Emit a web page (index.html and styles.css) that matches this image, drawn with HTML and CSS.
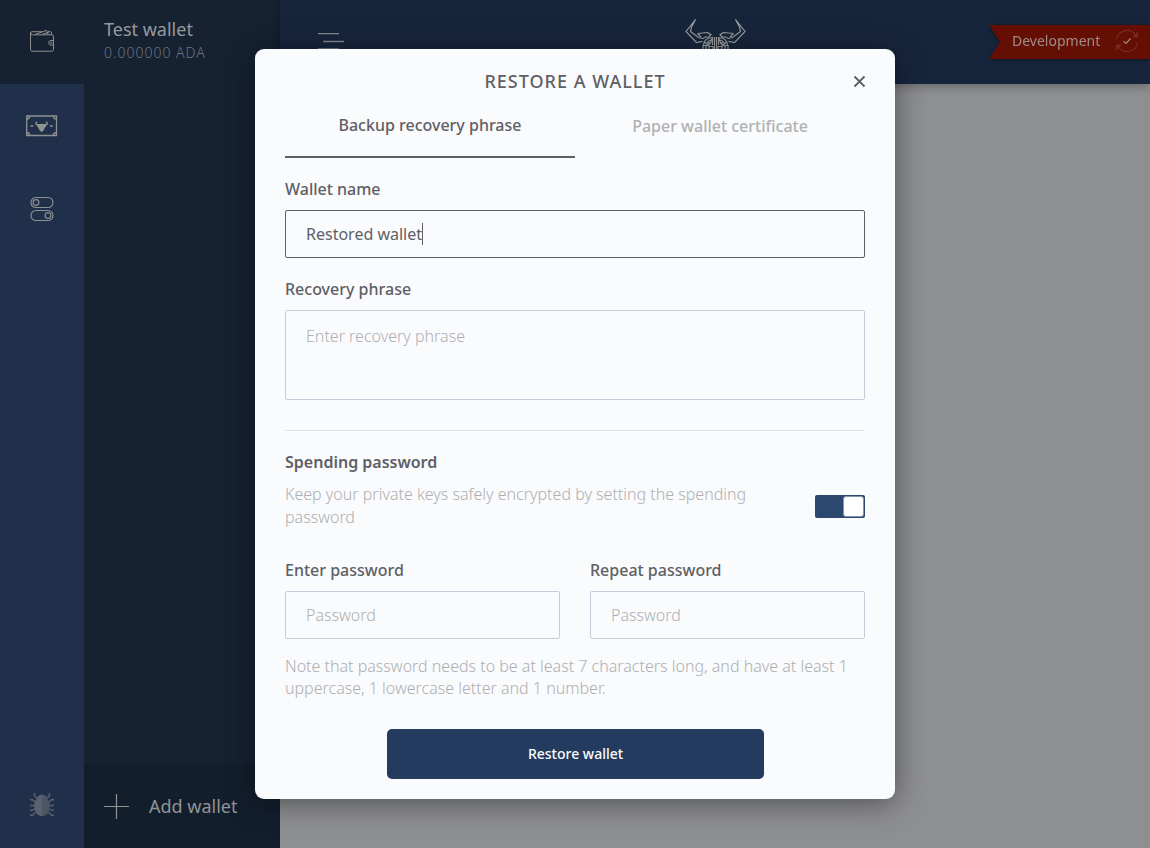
FILE: index.html
```html
<!DOCTYPE html>
<html lang="en">
<head>
<meta charset="utf-8">
<title>Restore a wallet</title>
<link rel="stylesheet" href="styles.css">
</head>
<body>
<div class="app">
  <nav class="rail">
    <a class="rail-item rail-active">
      <svg width="26" height="24" viewBox="0 0 26 24" fill="none" stroke="#8f8f8e" stroke-width="1"><path d="M1.500 3.500v17q0 1.700 1.700 1.700h19.600q1.700 0 1.700-1.700V7.500q0-1.700-1.700-1.700H3.500Q1.500 5.800 1.500 4.200T3.500 2.700H13M6 5.500L17.500 1.300 19 5.500M13 5.500L20 3M19 2.700h2.500q1 0 1 1v2M24.500 11.500h-2.500a2.300 2.300 0 0 0 0 4.600h2.500"/><circle cx="22.300" cy="13.800" r=".6"/></svg>
    </a>
    <a class="rail-item rail-money">
      <svg width="32" height="22" viewBox="0 0 32 22" fill="none" stroke="#8f9292" stroke-width="1.300"><path d="M.7 1h29.800v19.500H.7zM.7 4q3 0 3-3M27.500 1q0 3 3 3M.7 17.500q3 0 3 3M27.500 20.500q0-3 3-3M4.500 11h2.800M24 11h2.800"/><path stroke-width="1.400" d="M11 6.800Q9 8.700 10.700 9.700H20.500Q22.200 8.700 20.200 6.800"/><path fill="#8f9292" stroke="none" d="M11 9.300L14 9.800 15 8.800H16.200L17.200 9.800 20.200 9.300 19.700 12.200 18.700 12.700 18 15 16.200 16.800H15L13.200 15 12.500 12.700 11.500 12.200z"/></svg>
    </a>
    <a class="rail-item">
      <svg width="24" height="26" viewBox="0 0 24 26" fill="none" stroke="#8f9292" stroke-width="1.100"><rect x="1" y="1.500" width="22" height="10" rx="5"/><rect x="1" y="14.500" width="22" height="10" rx="5"/><circle cx="6" cy="6.500" r="2.900"/><circle cx="18" cy="19.500" r="2.900"/></svg>
    </a>
    <a class="rail-item rail-bottom">
      <svg width="26" height="26" viewBox="0 0 26 26"><path fill="none" stroke="#59616e" stroke-width="1.400" d="M5.500 1v2q0 2 3.500 3.500M20.500 1v2q0 2-3.500 3.500M1 7.700h2.500q1.500 2.500 4 2.500M25 7.700h-2.500q-1.500 2.500-4 2.500M1 13.500h24M1 18.300h2.500q1.500-1.500 4-1.500M25 18.300h-2.500q-1.500-1.500-4-1.500M1 23.300h2.500q2-3 5-3.200M25 23.300h-2.500q-2-3-5-3.200"/><path fill="#5b626f" d="M13 2.500Q8.500 3 8 6.500 5.300 9 5.300 14 5.300 23.500 13 24.500z"/><path fill="#4d5664" d="M13 2.500Q17.500 3 18 6.500 20.700 9 20.700 14 20.700 23.500 13 24.500z"/></svg>
    </a>
  </nav>
  <aside class="wallets">
    <div class="wallet">
      <div class="wallet-name">Test wallet</div>
      <div class="wallet-amount">0.000000 ADA</div>
    </div>
    <div class="add-wallet">
      <svg width="25" height="25" viewBox="0 0 25 25" stroke="#929394" stroke-width="1.200"><path d="M0 12.500h25M12.500 0v25"/></svg>
      <span>Add wallet</span>
    </div>
  </aside>
  <section class="main">
    <header class="topbar">
      <svg class="menu-icon" width="26" height="18" viewBox="0 0 26 18" stroke="#85888d" stroke-width="1.400"><path d="M0 1.600h21M5 9.500h21M0 17h21"/></svg>
      <svg class="logo" width="62" height="42" viewBox="0 0 62 42" fill="none" stroke="#979a9a" stroke-width="1.200"><g id="horn"><path d="M10.500 1.500L1 13.500 11.500 24.500 17.500 23.300M10.500 1.500L6.500 9 5.500 13.500 13.500 19.500 17.500 20.500M12.500 15.500L16 19M12.500 15.500L22.500 14.500 26 16.700 22.500 20M17.500 20.500L22 18.500M18.500 27Q19 20 27.500 19.500L25 26M22 26.500Q22 23 26 22M27.500 19.500V27M29.500 42V19M18 32V27.500H24V31M21 27.500V32M24 24V28.500H28V32M19.500 24L24 28"/></g><use href="#horn" transform="matrix(-1 0 0 1 61 0)"/></svg>
      <div class="ribbon-shadow"><div class="ribbon">
        <span>Development</span>
        <svg width="24" height="24" viewBox="0 0 24 24" fill="none" stroke="#792b25" stroke-width="1.200"><path d="M1.500 10.500A10.500 10.500 0 0 1 20.500 6M22.500 13.500A10.500 10.500 0 0 1 3.500 18"/><path fill="#792b25" d="M22.300 4v3.700h-4zM1.500 20v-4h4z"/><path stroke="#a08a84" stroke-width="1.300" d="M8.500 12.200l2.500 2.200 4.500-4.900"/></svg>
      </div></div>
    </header>
  </section>
</div>
<div class="dialog">
  <div class="dialog-head">
    <h1>RESTORE A WALLET</h1>
    <svg class="close" width="13" height="13" viewBox="0 0 13 13" stroke="#5e6066" stroke-width="1.900"><path d="M1.500 1.500l10 10M11.500 1.500l-10 10"/></svg>
  </div>
  <div class="tabs"><div class="tab tab-active">Backup recovery phrase</div><div class="tab">Paper wallet certificate</div></div>
  <div class="label">Wallet name</div>
  <div class="input input-focus">Restored wallet<i class="caret"></i></div>
  <div class="label label-next">Recovery phrase</div>
  <div class="input textarea">Enter recovery phrase</div>
  <div class="spending">
    <div class="label label-strong">Spending password</div>
    <div class="spending-row">
      <p class="hint">Keep your private keys safely encrypted by setting the spending password</p>
      <div class="toggle"><div class="knob"></div></div>
    </div>
  </div>
  <div class="passwords">
    <div class="field"><div class="label">Enter password</div><div class="input">Password</div></div>
    <div class="field"><div class="label">Repeat password</div><div class="input">Password</div></div>
  </div>
  <p class="hint note">Note that password needs to be at least 7 characters long, and have at least 1 uppercase, 1 lowercase letter and 1 number.</p>
  <div class="button">Restore wallet</div>
</div>
</body>
</html>
```

FILE: styles.css
```css
* { box-sizing: border-box; }
body { margin: 0; font-family: "Noto Sans", "Open Sans", sans-serif; font-size: 16px; line-height: 22px; color: #5e6066; overflow: hidden; }
h1, p { margin: 0; font-weight: 400; }
svg { display: block; flex: none; }
.app { display: grid; grid-template-columns: 84px 196px 1fr; height: 848px; }
.rail { background: #20304a; display: flex; flex-direction: column; }
.rail-item { height: 84px; display: flex; align-items: center; justify-content: center; padding-bottom: 2px; }
.rail-active { background: #162232; }
.rail-money { padding-bottom: 0; }
.rail-bottom { margin-top: auto; }
.wallets { background: #162232; display: flex; flex-direction: column; }
.wallet { padding: 17px 20px; }
.wallet-name { font-size: 18px; line-height: 24px; color: #97999b; }
.wallet-amount { font-size: 14px; line-height: 22px; margin-top: 1px; letter-spacing: 1px; font-weight: 300; color: #6d747d; }
.add-wallet { margin-top: auto; height: 84px; background: #131e2d; display: flex; align-items: center; gap: 20px; padding-left: 20px; font-size: 18px; color: #929394; }
.main { background: #8e8f91; min-width: 0; }
.topbar { height: 84px; background: #17253c; box-shadow: 0 2px 10px rgba(0,0,0,.3); display: flex; align-items: flex-start; padding-left: 38px; }
.menu-icon { margin-top: 32px; }
.logo { margin: 18px 0 0 341px; }
.ribbon-shadow { margin: 25px 0 0 auto; filter: drop-shadow(0 1px 2px rgba(0,0,0,.5)); }
.ribbon { width: 161px; height: 34px; background: #650e03; clip-path: polygon(0 0, 100% 0, 100% 100%, 0 100%, 11px 50%); display: flex; align-items: center; justify-content: space-between; padding: 0 11px 2px 23px; font-size: 14px; color: #9e8c88; }
.dialog { position: absolute; left: 255px; top: 49px; width: 640px; height: 750px; padding: 0 30px; background: #fafbfd; border-radius: 9px; box-shadow: 0 4px 30px rgba(0,0,0,.45); display: flex; flex-direction: column; }
.dialog-head { height: 64px; display: flex; align-items: center; justify-content: center; position: relative; }
.dialog-head h1 { font-size: 18px; letter-spacing: 1px; font-weight: 500; }
.close { position: absolute; right: -1px; top: 26px; }
.tabs { height: 45px; display: grid; grid-template-columns: 1fr 1fr; text-align: center; font-weight: 500; color: #b0b1b3; }
.tab { padding-top: 2px; }
.tab-active { padding-top: 1px; border-bottom: 2px solid #5e6066; color: #5e6066; }
.label { font-weight: 500; height: 22px; }
.tabs + .label { margin-top: 20px; }
.input { height: 48px; margin-top: 10px; border: 1px solid #c7ccd8; border-radius: 2px; padding: 12px 20px; font-weight: 300; color: #aeafb1; flex: none; }
.input-focus { border-color: #5e6066; font-weight: 400; color: #5e6066; display: flex; }
.caret { width: 1px; height: 22px; background: #5e6066; }
.label-next { margin-top: 20px; }
.textarea { height: 90px; padding-top: 14px; }
.spending { margin-top: 30px; border-top: 1px solid #dfe2e8; padding-top: 20px; }
.label-strong { font-weight: 600; }
.spending-row { margin-top: 10px; display: flex; justify-content: space-between; align-items: center; }
.hint { font-weight: 300; color: #aeafb1; line-height: 23px; }
.spending-row .hint { width: 490px; }
.toggle { width: 50px; height: 23px; background: #2d486e; border-radius: 2px; padding: 1px; display: flex; justify-content: flex-end; }
.knob { width: 21px; height: 21px; background: #fff; border: 1px solid #8495ae; border-radius: 3px; }
.passwords { margin-top: 30px; display: grid; grid-template-columns: 1fr 1fr; gap: 30px; }
.note { margin-top: 16px; line-height: 22px; }
.button { margin: 30px auto 0 102px; width: 377px; height: 50px; border-radius: 5px; background: #233b5e; color: #fafbfd; font-size: 14px; font-weight: 500; line-height: 50px; text-align: center; }
```
